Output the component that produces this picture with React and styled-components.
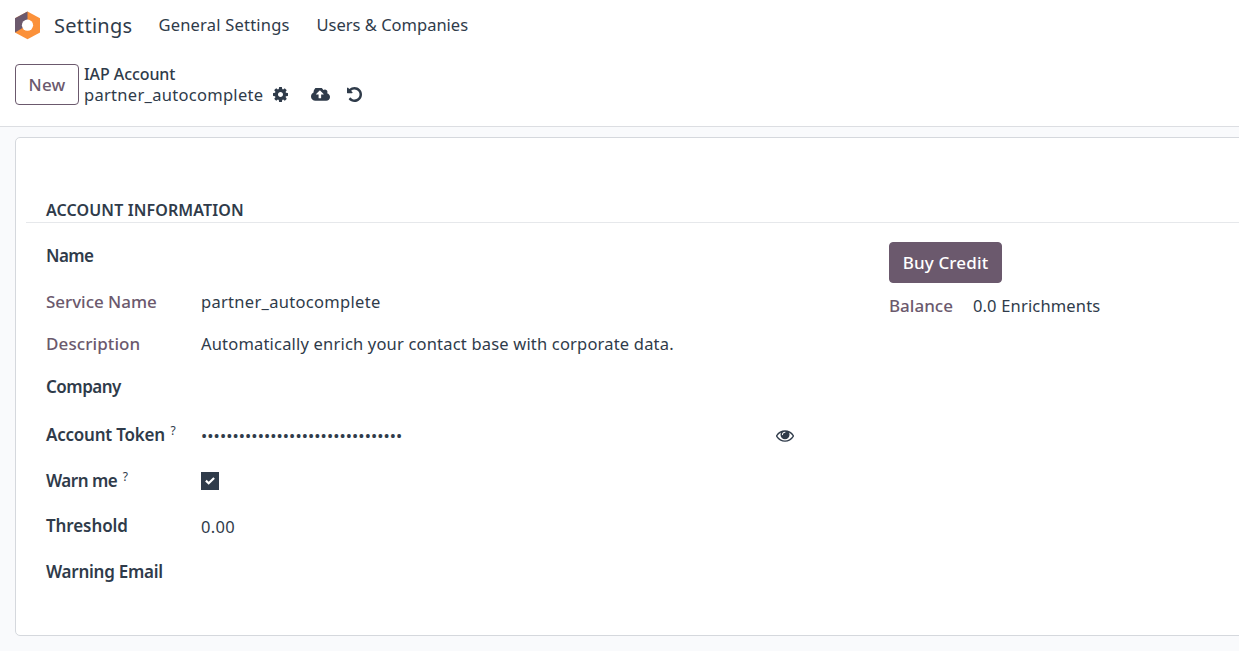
import React from "react";
import styled, { createGlobalStyle } from "styled-components";

const ink = "#2f3b4a";
const plum = "#6b596d";

const Global = createGlobalStyle`
  * { box-sizing: border-box; }
  body {
    margin: 0;
    background: #f9fafc;
    color: ${ink};
    font-family: "Noto Sans", "Open Sans", sans-serif;
    font-size: 16.5px;
    line-height: 22px;
    overflow: hidden;
  }
`;

const Page = styled.div`
  display: flex;
  flex-direction: column;
  height: 651px;
  overflow: hidden;
`;

const Text = styled.span`
  white-space: nowrap;
  letter-spacing: ${(p) => p.$track || 0}px;
`;

const Header = styled.header`
  height: 127px;
  flex: none;
  background: #fff;
  border-bottom: 1px solid #dcdee2;
`;

const Navbar = styled.nav`
  display: flex;
  align-items: center;
  height: 51px;
  padding-left: 14px;
`;

const AppName = styled(Text)`
  font-size: 20px;
  line-height: 28px;
  margin: 0 26px 0 13px;
`;

const MenuItem = styled(Text)`
  width: ${(p) => p.$width}px;
  padding-bottom: 2px;
`;

const ControlPanel = styled.div`
  display: flex;
  padding: 13px 0 0 15px;
`;

const Button = styled.button`
  display: flex;
  align-items: center;
  justify-content: center;
  width: ${(p) => p.$width}px;
  height: 41px;
  padding: 0 0 1px;
  border: 1px solid ${plum};
  border-radius: 4px;
  background: ${(p) => (p.$primary ? plum : "#fff")};
  color: ${(p) => (p.$primary ? "#fff" : plum)};
  font: 500 17px "Noto Sans", sans-serif;
`;

const Breadcrumb = styled.div`
  display: flex;
  flex-direction: column;
  margin-left: 5px;
`;

const Parent = styled(Text)`
  font-size: 16px;
  font-weight: 500;
  line-height: 21px;
`;

const Current = styled.div`
  display: flex;
  align-items: center;
  height: 20px;
`;

const IconSlot = styled.span`
  display: flex;
  margin: -1px 0 0 ${(p) => p.$gap}px;
`;

const Sheet = styled.main`
  flex: none;
  height: 499px;
  margin: 10px -10px 0 15px;
  padding: 61px 0 0 10px;
  background: #fff;
  border: 1px solid #d5d8dd;
  border-radius: 5px;
`;

const SectionTitle = styled.h2`
  height: 24px;
  margin: 0;
  padding-left: 20px;
  border-bottom: 1px solid #e6e8eb;
  font-size: 16px;
  font-weight: 600;
  line-height: 22px;
`;

const Columns = styled.div`
  display: grid;
  grid-template-columns: 843px 1fr;
  padding: 10px 0 0 20px;
`;

const Row = styled.div`
  display: grid;
  grid-template-columns: 155px 574px auto;
  align-items: center;
  justify-content: start;
  height: ${(p) => p.$h}px;
`;

const Label = styled(Text)`
  font-size: 17px;
  font-weight: ${(p) => (p.$muted ? 500 : 600)};
  color: ${(p) => (p.$muted ? plum : ink)};
`;

const Help = styled.sup`
  margin-left: 5.5px;
  font-size: 12px;
  font-weight: 400;
  line-height: 0;
  letter-spacing: 0;
  vertical-align: 6px;
`;

const Value = styled(Text)`
  padding-top: ${(p) => p.$drop || 0}px;
`;

const Reveal = styled.span`
  display: flex;
  padding: 2px 0 0 0.5px;
`;

const Check = styled.span`
  display: flex;
  align-items: center;
  justify-content: center;
  width: 18px;
  height: 18px;
  background: ${ink};
`;

const Side = styled.div`
  padding-top: 9px;
`;

const Balance = styled.div`
  display: flex;
  gap: 20px;
  padding-top: 12px;
`;

const paths = {
  cog: "M1152 896q0-106-75-181t-181-75-181 75-75 181 75 181 181 75 181-75 75-181zm512-109v222q0 12-8 23t-20 13l-185 28q-19 54-39 91 35 50 107 138 10 12 10 25t-9 23q-27 37-99 108t-94 71q-12 0-26-9l-138-108q-44 23-91 38-16 136-29 186-7 28-36 28h-222q-14 0-24.5-8.5t-11.5-21.5l-28-184q-49-16-90-37l-141 107q-10 9-25 9-14 0-25-11-126-114-165-168-7-10-7-23 0-12 8-23 15-21 51-66.5t54-70.5q-27-50-41-99l-183-27q-13-2-21-12.5t-8-23.5v-222q0-12 8-23t19-13l186-28q14-46 39-92-40-57-107-138-10-12-10-24 0-10 9-23 26-36 98.5-107.5t94.5-71.5q13 0 26 10l138 107q44-23 91-38 16-136 29-186 7-28 36-28h222q14 0 24.5 8.5t11.5 21.5l28 184q49 16 90 37l142-107q9-9 24-9 13 0 25 10 129 119 165 170 7 8 7 22 0 12-8 23-15 21-51 66.5t-54 70.5q26 50 41 98l183 28q13 2 21 12.5t8 23.5z",
  cloud: "M1280 864q0-14-9-23l-352-352q-9-9-23-9t-23 9l-351 351q-10 12-10 24 0 14 9 23t23 9h224v352q0 13 9.5 22.5t22.5 9.5h192q13 0 22.5-9.5t9.5-22.5v-352h224q13 0 22.5-9.5t9.5-22.5zm640 288q0 159-112.5 271.5t-271.5 112.5h-1088q-185 0-316.5-131.5t-131.5-316.5q0-130 70-240t188-165q-2-30-2-43 0-212 150-362t362-150q156 0 285.5 87t188.5 231q71-62 166-62 106 0 181 75t75 181q0 76-41 138 130 31 213.5 135.5t83.5 238.5z",
  undo: "M1664 896q0 156-61 298t-164 245-245 164-298 61q-172 0-327-72.5t-264-204.5q-7-10-6.5-22.5t8.5-20.5l137-138q10-9 25-9 16 2 23 12 73 95 179 147t225 52q104 0 198.5-40.5t163.5-109.5 109.5-163.5 40.5-198.5-40.5-198.5-109.5-163.5-163.5-109.5-198.5-40.5q-98 0-188 35.5t-160 101.5l137 138q31 30 14 69-17 40-59 40h-448q-26 0-45-19t-19-45v-448q0-42 40-59 39-17 69 14l130 129q107-101 244.5-156.5t284.5-55.5q156 0 298 61t245 164 164 245 61 298z",
  eye: "M1664 960q-152-236-381-353 61 104 61 225 0 185-131.5 316.5t-316.5 131.5-316.5-131.5-131.5-316.5q0-121 61-225-229 117-381 353 133 205 333.5 326.5t434.5 121.5 434.5-121.5 333.5-326.5zm-720-384q0-20-14-34t-34-14q-125 0-214.5 89.5t-89.5 214.5q0 20 14 34t34 14 34-14 14-34q0-86 61-147t147-61q20 0 34-14t14-34zm848 384q0 34-20 69-140 230-376.5 368.5t-499.5 138.5-499.5-139-376.5-368q-20-35-20-69t20-69q140-229 376.5-368t499.5-139 499.5 139 376.5 368q20 35 20 69z",
};

function Icon({ name, box, width, height }) {
  return (
    <svg width={width} height={height} viewBox={box} fill={ink}>
      <path d={paths[name]} />
    </svg>
  );
}

function Logo() {
  return (
    <svg width="27" height="29" viewBox="0 0 27 29">
      <path d="M13.5 0.5 26 7.3V21.4L13.5 28.3 1 21.4V7.3Z" fill="#fb913a" />
      <path d="M13.5 0.5V14L1 21.4V7.3Z" fill="#6b596d" />
      <circle cx="13.5" cy="14.2" r="5.6" fill="#fff" />
    </svg>
  );
}

export default function App() {
  return (
    <Page>
      <Global />
      <Header>
        <Navbar>
          <Logo />
          <AppName $track={0.3}>Settings</AppName>
          <MenuItem $width={158} $track={0.2}>General Settings</MenuItem>
          <MenuItem>Users &amp; Companies</MenuItem>
        </Navbar>
        <ControlPanel>
          <Button $width={64}><Text $track={0.2}>New</Text></Button>
          <Breadcrumb>
            <Parent $track={-0.08}>IAP Account</Parent>
            <Current>
              <Text $track={0.29}>partner_autocomplete</Text>
              <IconSlot $gap={10}><Icon name="cog" box="128 128 1536 1536" width={15} height={15} /></IconSlot>
              <IconSlot $gap={23}><Icon name="cloud" box="0 256 1920 1280" width={19} height={13} /></IconSlot>
              <IconSlot $gap={17}><Icon name="undo" box="128 128 1536 1536" width={15} height={15} /></IconSlot>
            </Current>
          </Breadcrumb>
        </ControlPanel>
      </Header>
      <Sheet>
        <SectionTitle><Text $track={0.12}>ACCOUNT INFORMATION</Text></SectionTitle>
        <Columns>
          <div>
            <Row $h={46}><Label $track={-0.6}>Name</Label></Row>
            <Row $h={46}>
              <Label $muted $track={-0.04}>Service Name</Label>
              <Value $track={0.3}>partner_autocomplete</Value>
            </Row>
            <Row $h={38}>
              <Label $muted $track={0.1}>Description</Label>
              <Value $track={0.185}>Automatically enrich your contact base with corporate data.</Value>
            </Row>
            <Row $h={48}><Label $track={-0.5}>Company</Label></Row>
            <Row $h={48}>
              <Label $track={-0.22}>Account Token<Help>?</Help></Label>
              <Value $drop={2} $track={0.09}>{"•".repeat(32)}</Value>
              <Reveal><Icon name="eye" box="0 384 1792 1152" width={18} height={12} /></Reveal>
            </Row>
            <Row $h={44}>
              <Label $track={-0.5}>Warn me<Help>?</Help></Label>
              <Check>
                <svg width="10" height="8" viewBox="0 0 10 8" fill="none" stroke="#fff" strokeWidth="2.2">
                  <path d="M0.9 3.6 3.7 6.3 9.1 1" />
                </svg>
              </Check>
            </Row>
            <Row $h={46}>
              <Label $track={-0.1}>Threshold</Label>
              <Value $drop={1} $track={0.3}>0.00</Value>
            </Row>
            <Row $h={46}><Label $track={-0.26}>Warning Email</Label></Row>
          </div>
          <Side>
            <Button $primary $width={113}><Text $track={0.15}>Buy Credit</Text></Button>
            <Balance>
              <Label $muted>Balance</Label>
              <Value $track={0.17}>0.0 Enrichments</Value>
            </Balance>
          </Side>
        </Columns>
      </Sheet>
    </Page>
  );
}
